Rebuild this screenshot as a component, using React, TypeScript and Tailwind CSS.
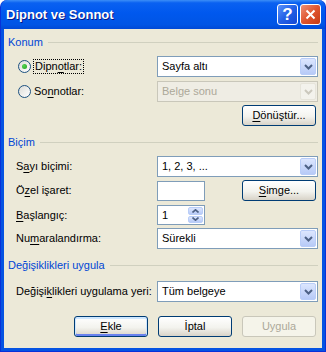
import React from "react";

function Chevron({ color }: { color: string }) {
  return (
    <svg width="9" height="6" viewBox="0 0 9 6">
      <path d="M1 1 L4.5 4.5 L8 1" fill="none" stroke={color} strokeWidth="2" />
    </svg>
  );
}

function DropButton({ disabled }: { disabled?: boolean }) {
  return (
    <div
      className={`w-[16px] h-full flex items-center justify-center rounded-[2px] border ${
        disabled
          ? "border-[#E6E4DA] bg-[#F3F2EC]"
          : "border-[#B9CDF8] bg-[linear-gradient(to_bottom,#DCE6FE,#B7CAF7)]"
      }`}
    >
      <Chevron color={disabled ? "#CBC8BD" : "#4D6185"} />
    </div>
  );
}

function Combo({ text, disabled }: { text: string; disabled?: boolean }) {
  return (
    <div
      className={`w-[161px] h-[21px] flex items-stretch border p-px ${
        disabled ? "border-[#C9C7BA] bg-[#EFEDE4]" : "border-[#7F9DB9] bg-white"
      }`}
    >
      <span className={`flex-1 pl-[3px] leading-[17px] ${disabled ? "text-[#ACA899]" : "text-black"}`}>
        {text}
      </span>
      <DropButton disabled={disabled} />
    </div>
  );
}

function Btn({
  children,
  isDefault,
  disabled,
}: {
  children: React.ReactNode;
  isDefault?: boolean;
  disabled?: boolean;
}) {
  return (
    <div
      className={`h-[21px] w-[74px] rounded-[3px] border flex items-center justify-center ${
        disabled
          ? "border-[#C9C7BA] text-[#ACA899] bg-[#F5F4EA]"
          : "border-[#003C74] text-black bg-[linear-gradient(to_bottom,#FFFFFF,#F3F3EE_55%,#D8D3C8)]"
      } ${isDefault ? "shadow-[inset_0_1px_0_1px_#CEE7FF,inset_0_-1px_0_1px_#6982EE]" : ""}`}
    >
      {children}
    </div>
  );
}

function Radio({ checked }: { checked?: boolean }) {
  return (
    <div className="w-[13px] h-[13px] rounded-full border border-[#1C5180] bg-[linear-gradient(135deg,#DCDCD7,#FFFFFF)] flex items-center justify-center">
      {checked && <div className="w-[5px] h-[5px] rounded-full bg-[radial-gradient(circle_at_35%_35%,#55D551,#21A121)]" />}
    </div>
  );
}

function GroupHeader({ title }: { title: string }) {
  return (
    <div className="h-[14px] flex items-center pl-[4px] pr-[4px]">
      <span className="text-[#0046D5] leading-[14px]">{title}</span>
      <div className="flex-1 h-px bg-[#D0D0BF] ml-[5px]" />
    </div>
  );
}

function Label({ children }: { children: React.ReactNode }) {
  return <div className="w-[153px] pl-[12px] shrink-0">{children}</div>;
}

const U = ({ children }: { children: React.ReactNode }) => <span className="underline underline-offset-[2px]">{children}</span>;

export default function App() {
  return (
    <div className="w-[326px] h-[352px] font-['Liberation_Sans',Arial,sans-serif] text-[11px] text-black select-none">
      <div className="w-full h-full flex flex-col rounded-t-[7px] bg-[#0553E2] border-x border-b border-[#0831D9]">
        {/* title bar */}
        <div className="h-[29px] shrink-0 flex items-center justify-between pl-[5px] pr-[4px] rounded-t-[7px] bg-[linear-gradient(to_bottom,#3C8EF7_0%,#0A61F1_10%,#0058EE_45%,#0055E5_85%,#0049D6_100%)]">
          <span className="text-white font-bold text-[13px] [text-shadow:1px_1px_#0A1883]">Dipnot ve Sonnot</span>
          <div className="flex gap-[2px]">
            <div className="w-[21px] h-[21px] rounded-[3px] border border-white bg-[linear-gradient(135deg,#5B93FC,#2260E6_50%,#1447D4)] flex items-center justify-center text-white font-bold text-[17px] leading-none">
              ?
            </div>
            <div className="w-[21px] h-[21px] rounded-[3px] border border-white bg-[linear-gradient(135deg,#EE9177,#E0552F_50%,#C63A13)] flex items-center justify-center">
              <svg width="11" height="11" viewBox="0 0 11 11">
                <path d="M1.5 1.5 L9.5 9.5 M9.5 1.5 L1.5 9.5" stroke="white" strokeWidth="2" />
              </svg>
            </div>
          </div>
        </div>

        {/* body */}
        <div className="flex-1 mx-[3px] mb-[3px] bg-[#ECE9D8] flex flex-col pt-[6px]">
          <GroupHeader title="Konum" />

          <div className="mt-[7px] h-[21px] flex items-center">
            <div className="w-[153px] pl-[14px] shrink-0 flex items-center gap-[2px]">
              <Radio checked />
              <span className="border border-dotted border-black px-px leading-[13px]">
                Dipn<U>o</U>tlar:
              </span>
            </div>
            <Combo text="Sayfa altı" />
          </div>

          <div className="mt-[4px] h-[21px] flex items-center">
            <div className="w-[153px] pl-[14px] shrink-0 flex items-center gap-[3px]">
              <Radio />
              <span>
                So<U>n</U>notlar:
              </span>
            </div>
            <Combo text="Belge sonu" disabled />
          </div>

          <div className="mt-[3px] flex justify-end pr-[6px]">
            <Btn>
              <U>D</U>önüştür...
            </Btn>
          </div>

          <div className="mt-[9px]">
            <GroupHeader title="Biçim" />
          </div>

          <div className="mt-[7px] h-[21px] flex items-center">
            <Label>
              S<U>a</U>yı biçimi:
            </Label>
            <Combo text="1, 2, 3, ..." />
          </div>

          <div className="mt-[3px] h-[21px] flex items-center">
            <Label>
              Ö<U>z</U>el işaret:
            </Label>
            <div className="w-[48px] h-[20px] border border-[#7F9DB9] bg-white" />
            <div className="flex-1 flex justify-end pr-[6px]">
              <Btn>
                <U>S</U>imge...
              </Btn>
            </div>
          </div>

          <div className="mt-[4px] h-[20px] flex items-center">
            <Label>
              <U>B</U>aşlangıç:
            </Label>
            <div className="w-[48px] h-[20px] border border-[#7F9DB9] bg-white flex items-stretch p-px">
              <span className="flex-1 pl-[3px] leading-[16px]">1</span>
              <div className="w-[15px] flex flex-col gap-px">
                <div className="flex-1 rounded-[2px] border border-[#B9CDF8] bg-[linear-gradient(to_bottom,#DCE6FE,#B7CAF7)] flex items-center justify-center">
                  <svg width="7" height="4" viewBox="0 0 7 4">
                    <path d="M0.5 3.5 L3.5 0.8 L6.5 3.5" fill="none" stroke="#4D6185" strokeWidth="1.6" />
                  </svg>
                </div>
                <div className="flex-1 rounded-[2px] border border-[#B9CDF8] bg-[linear-gradient(to_bottom,#DCE6FE,#B7CAF7)] flex items-center justify-center">
                  <svg width="7" height="4" viewBox="0 0 7 4">
                    <path d="M0.5 0.5 L3.5 3.2 L6.5 0.5" fill="none" stroke="#4D6185" strokeWidth="1.6" />
                  </svg>
                </div>
              </div>
            </div>
          </div>

          <div className="mt-[3px] h-[21px] flex items-center">
            <Label>
              Nu<U>m</U>aralandırma:
            </Label>
            <Combo text="Sürekli" />
          </div>

          <div className="mt-[9px]">
            <GroupHeader title="Değişiklikleri uygula" />
          </div>

          <div className="mt-[9px] h-[21px] flex items-center">
            <Label>
              Değişi<U>k</U>likleri uygulama yeri:
            </Label>
            <Combo text="Tüm belgeye" />
          </div>

          <div className="mt-[14px] flex justify-end gap-[10px] pr-[6px]">
            <Btn isDefault>
              <U>E</U>kle
            </Btn>
            <Btn>İptal</Btn>
            <Btn disabled>Uygula</Btn>
          </div>
        </div>
      </div>
    </div>
  );
}
